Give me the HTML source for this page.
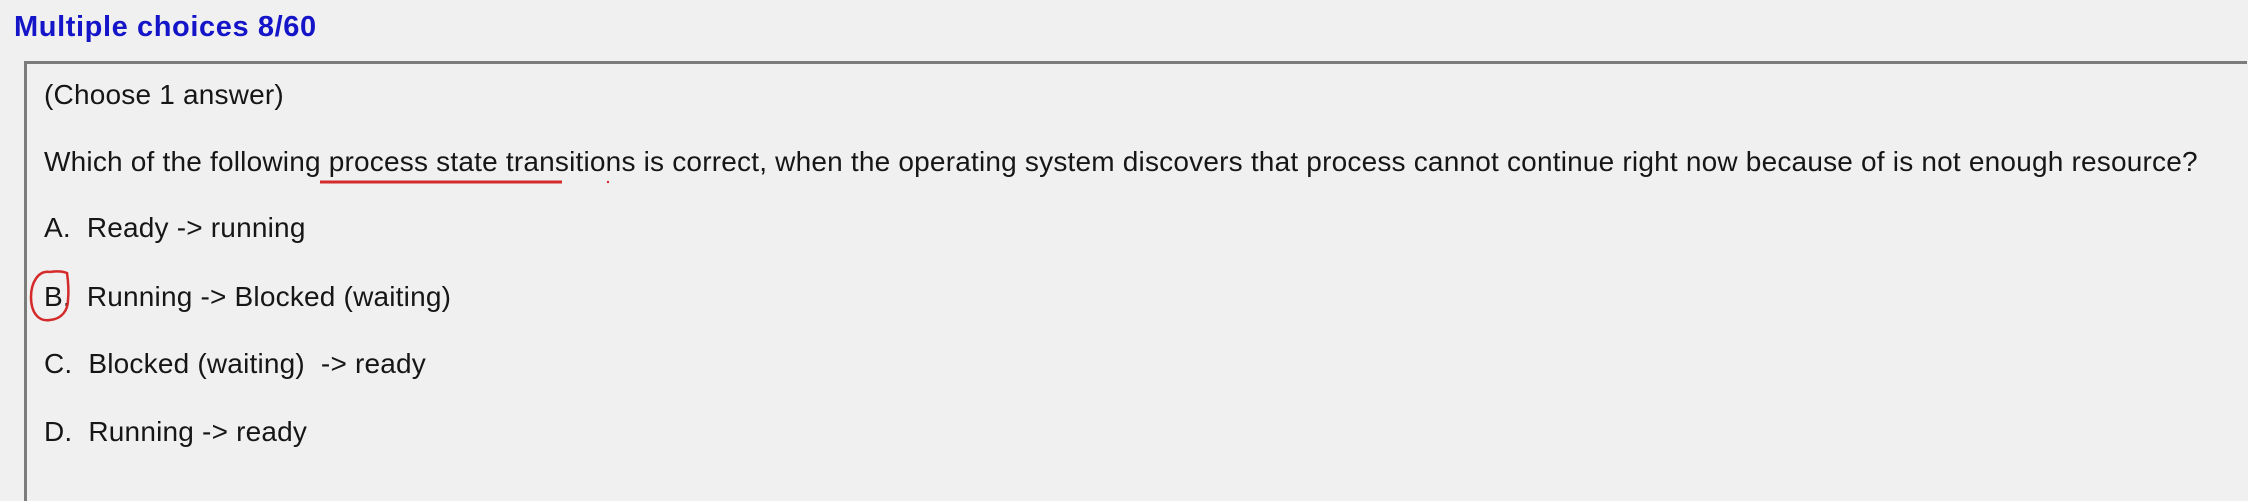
<!DOCTYPE html>
<html><head><meta charset="utf-8"><style>
html,body{margin:0;padding:0;width:2248px;height:501px;overflow:hidden;background:#f0f0f0;}
body{position:relative;font-family:"Liberation Sans",Arial,sans-serif;}
.t{position:absolute;left:44px;font-size:28px;line-height:32px;color:#161616;white-space:pre;letter-spacing:0.2px;}
#title{position:absolute;left:14px;top:11px;font-size:29px;line-height:32px;font-weight:bold;color:#1414c8;white-space:pre;letter-spacing:0.6px;}
#box{position:absolute;left:24px;top:61px;width:2220px;height:437px;border-left:3px solid #7c7c7c;border-top:3px solid #7c7c7c;}
</style></head><body>
<div id="title">Multiple choices 8/60</div>
<div id="box"></div>
<div class="t" style="top:79px">(Choose 1 answer)</div>
<div class="t" style="top:146px">Which of the following process state transitions is correct, when the operating system discovers that process cannot continue right now because of is not enough resource?</div>
<div class="t" style="top:212px">A.  Ready -&gt; running</div>
<div class="t" style="top:281px">B.  Running -&gt; Blocked (waiting)</div>
<div class="t" style="top:348px">C.  Blocked (waiting)  -&gt; ready</div>
<div class="t" style="top:416px">D.  Running -&gt; ready</div>
<svg width="2248" height="501" style="position:absolute;left:0;top:0">
<line x1="320" y1="182" x2="562" y2="182" stroke="#d42a2a" stroke-width="3"/>
<circle cx="608" cy="182" r="1.2" fill="#d42a2a"/>
<path d="M50 272 C38 270 31 283 31 297 C31 312 38 322 50 320 C62 319 68 310 68 300 C69 290 68 280 67 273 C62 271 56 271 50 272" fill="none" stroke="#d42a2a" stroke-width="2.5"/>
</svg>
</body></html>
